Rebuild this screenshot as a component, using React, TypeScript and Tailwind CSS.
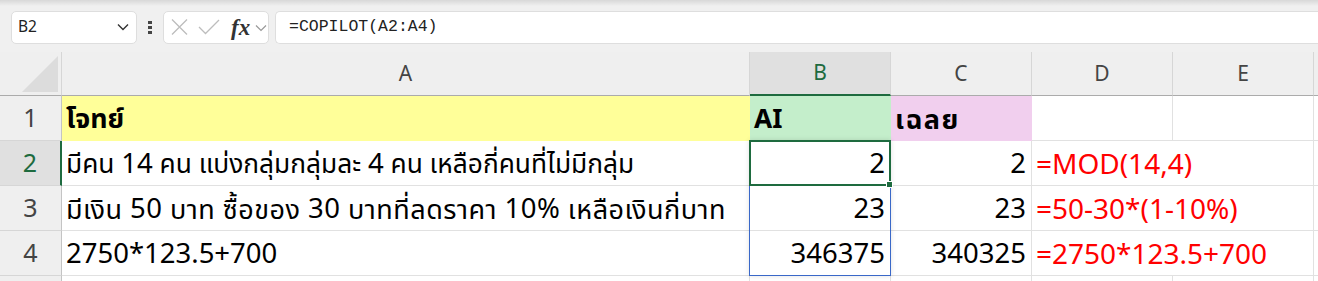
import React from "react";

const THAI = '"Noto Sans", "Noto Sans Thai", "Leelawadee UI", Tahoma, sans-serif';

function HeaderCell({ label, active }: { label: string; active?: boolean }) {
  return (
    <div
      className={
        "flex items-center justify-center border-r border-r-[#d6d6d6] text-[21px] " +
        (active
          ? "bg-[#e0e0e0] text-[#1e6b3f] border-b-2 border-b-[#1e6b3f]"
          : "bg-[#efefef] text-[#444] border-b border-b-[#ababab]")
      }
    >
      {label}
    </div>
  );
}

function RowHead({ n, active }: { n?: number; active?: boolean }) {
  return (
    <div
      className={
        "flex items-center justify-center border-b border-b-[#d6d6d6] text-[25px] " +
        (active
          ? "bg-[#e0e0e0] text-[#1e6b3f] border-r-2 border-r-[#1e6b3f]"
          : "bg-[#efefef] text-[#444] border-r border-r-[#c4c4c4]")
      }
    >
      {n}
    </div>
  );
}

function Cell({
  children,
  right,
  bold,
  bg,
  noRight,
  red,
  size = "text-[26.3px]",
  overlay,
}: {
  children?: React.ReactNode;
  right?: boolean;
  bold?: boolean;
  bg?: string;
  noRight?: boolean;
  red?: boolean;
  size?: string;
  overlay?: React.ReactNode;
}) {
  return (
    <div
      className={
        "flex items-center whitespace-nowrap overflow-visible leading-none border-b " +
        size +
        " " +
        (overlay ? "relative " : "") +
        (noRight ? "" : "border-r ") +
        (right ? "justify-end pr-[5px] " : "pl-[4px] ") +
        (bold ? "font-bold " : "") +
        (red ? "text-[#ff0000] " : "text-black ") +
        (bg ? bg : "border-[#e1e1e1]")
      }
      style={{ fontFamily: THAI }}
    >
      {children}
      {overlay}
    </div>
  );
}

const N = ({ children }: { children: React.ReactNode }) => <span className="text-[27.5px]">{children}</span>;

const Selection = (
  <>
    <div className="absolute -left-px -top-px w-[142px] h-[136px] border border-[#3a68c8] shadow-[0_0_5px_rgba(0,0,0,0.12)] pointer-events-none" />
    <div className="absolute -left-px -top-px w-[142px] h-[46px] border-2 border-[#1e6b3f] pointer-events-none">
      <span className="absolute -right-[4px] -bottom-[4px] w-[7px] h-[7px] bg-[#1e6b3f] border border-white" />
    </div>
  </>
);

export default function App() {
  return (
    <div className="w-[1318px] h-[281px] overflow-hidden bg-white" style={{ fontFamily: '"Noto Sans", sans-serif' }}>
      {/* toolbar */}
      <div className="h-[52px] bg-[#f0f0f0] flex flex-col">
        <div className="h-[6px] bg-linear-to-b from-[#d8d8d8] to-[#f0f0f0]" />
        <div className="flex items-center h-[34px] mt-[4px]">
          <div className="ml-[11px] w-[126px] h-[33px] bg-white border border-[#dedede] rounded-[5px] flex items-center pl-[6px] pr-[7px] justify-between">
            <span className="text-[15.5px] text-[#222]">B2</span>
            <svg width="12" height="8" viewBox="0 0 12 8">
              <polyline points="1,1.5 6,6.5 11,1.5" fill="none" stroke="#333" strokeWidth="1.4" />
            </svg>
          </div>
          <div className="w-[26px] flex flex-col items-center gap-[2px]">
            <span className="w-[4px] h-[3px] bg-[#444]" />
            <span className="w-[4px] h-[3px] bg-[#444]" />
            <span className="w-[4px] h-[3px] bg-[#444]" />
          </div>
          <div className="w-[106px] h-[33px] bg-white border border-[#dedede] rounded-[5px] flex items-center pl-[7px]">
            <svg width="17" height="16" viewBox="0 0 17 16">
              <path d="M1 0.5 L16 15.5 M16 0.5 L1 15.5" stroke="#bdbdbd" strokeWidth="1.3" fill="none" />
            </svg>
            <svg width="22" height="16" viewBox="0 0 22 16" className="ml-[10px]">
              <polyline points="1,8 7.5,14.5 21,1" stroke="#bdbdbd" strokeWidth="1.3" fill="none" />
            </svg>
            <span
              className="ml-[11px] text-[23px] italic font-bold text-[#333] leading-none"
              style={{ fontFamily: '"Liberation Serif", serif' }}
            >
              fx
            </span>
            <svg width="12" height="8" viewBox="0 0 12 8" className="ml-[5px] mt-[2px]">
              <polyline points="1,1.5 6,6.5 11,1.5" fill="none" stroke="#999" strokeWidth="1.2" />
            </svg>
          </div>
          <div className="ml-[6px] flex-1 h-[33px] bg-white border border-[#dedede] rounded-l-[5px] border-r-0 flex items-center pl-[13px]">
            <span className="text-[16.5px] text-[#222]" style={{ fontFamily: '"Liberation Mono", monospace' }}>
              =COPILOT(A2:A4)
            </span>
          </div>
        </div>
      </div>

      {/* grid */}
      <div className="grid grid-cols-[62px_688px_141px_141px_141px_141px_1fr] grid-rows-[44px_45px_45px_45px_45px_45px]">
        {/* header row */}
        <div className="bg-[#efefef] border-r border-r-[#d6d6d6] border-b border-b-[#ababab] flex items-end justify-end pr-[3px] pb-[3px]">
          <svg width="36" height="36" viewBox="0 0 36 36">
            <polygon points="36,0 36,36 0,36" fill="#dcdcdc" />
          </svg>
        </div>
        <HeaderCell label="A" />
        <HeaderCell label="B" active />
        <HeaderCell label="C" />
        <HeaderCell label="D" />
        <HeaderCell label="E" />
        <div className="bg-[#efefef] border-b border-b-[#ababab]" />

        {/* row 1 */}
        <RowHead n={1} />
        <Cell bold size="text-[26.8px]" bg="bg-[#ffff99] border-[#ffff99]">โจทย์</Cell>
        <Cell bold bg="bg-[#c4eecb] border-[#c4eecb]">AI</Cell>
        <Cell bold size="text-[27px] tracking-[1.5px]" bg="bg-[#f1cfee] border-[#f1cfee]">เฉลย</Cell>
        <Cell />
        <Cell />
        <Cell noRight />

        {/* row 2 */}
        <RowHead n={2} active />
        <Cell>
          มีคน&nbsp;<N>14</N>&nbsp;คน แบ่งกลุ่มกลุ่มละ&nbsp;<N>4</N>&nbsp;คน เหลือกี่คนที่ไม่มีกลุ่ม
        </Cell>
        <Cell right size="text-[27.5px]" overlay={Selection}>2</Cell>
        <Cell right size="text-[27.5px]">2</Cell>
        <Cell red noRight size="text-[28px]">=MOD(14,4)</Cell>
        <Cell />
        <Cell noRight />

        {/* row 3 */}
        <RowHead n={3} />
        <Cell size="text-[27px] tracking-[0.5px]">
          มีเงิน&nbsp;<N>50</N>&nbsp;บาท ซื้อของ&nbsp;<N>30</N>&nbsp;บาทที่ลดราคา&nbsp;<N>10%</N>&nbsp;เหลือเงินกี่บาท
        </Cell>
        <Cell right size="text-[27.5px]">23</Cell>
        <Cell right size="text-[27.5px]">23</Cell>
        <Cell red noRight size="text-[28px]">=50-30*(1-10%)</Cell>
        <Cell />
        <Cell noRight />

        {/* row 4 */}
        <RowHead n={4} />
        <Cell size="text-[27.5px]">2750*123.5+700</Cell>
        <Cell right size="text-[27.5px]">346375</Cell>
        <Cell right size="text-[27.5px]">340325</Cell>
        <Cell red noRight size="text-[28px]">=2750*123.5+700</Cell>
        <Cell />
        <Cell noRight />

        {/* row 5 */}
        <RowHead />
        <Cell />
        <Cell />
        <Cell />
        <Cell />
        <Cell />
        <Cell noRight />
      </div>
    </div>
  );
}
